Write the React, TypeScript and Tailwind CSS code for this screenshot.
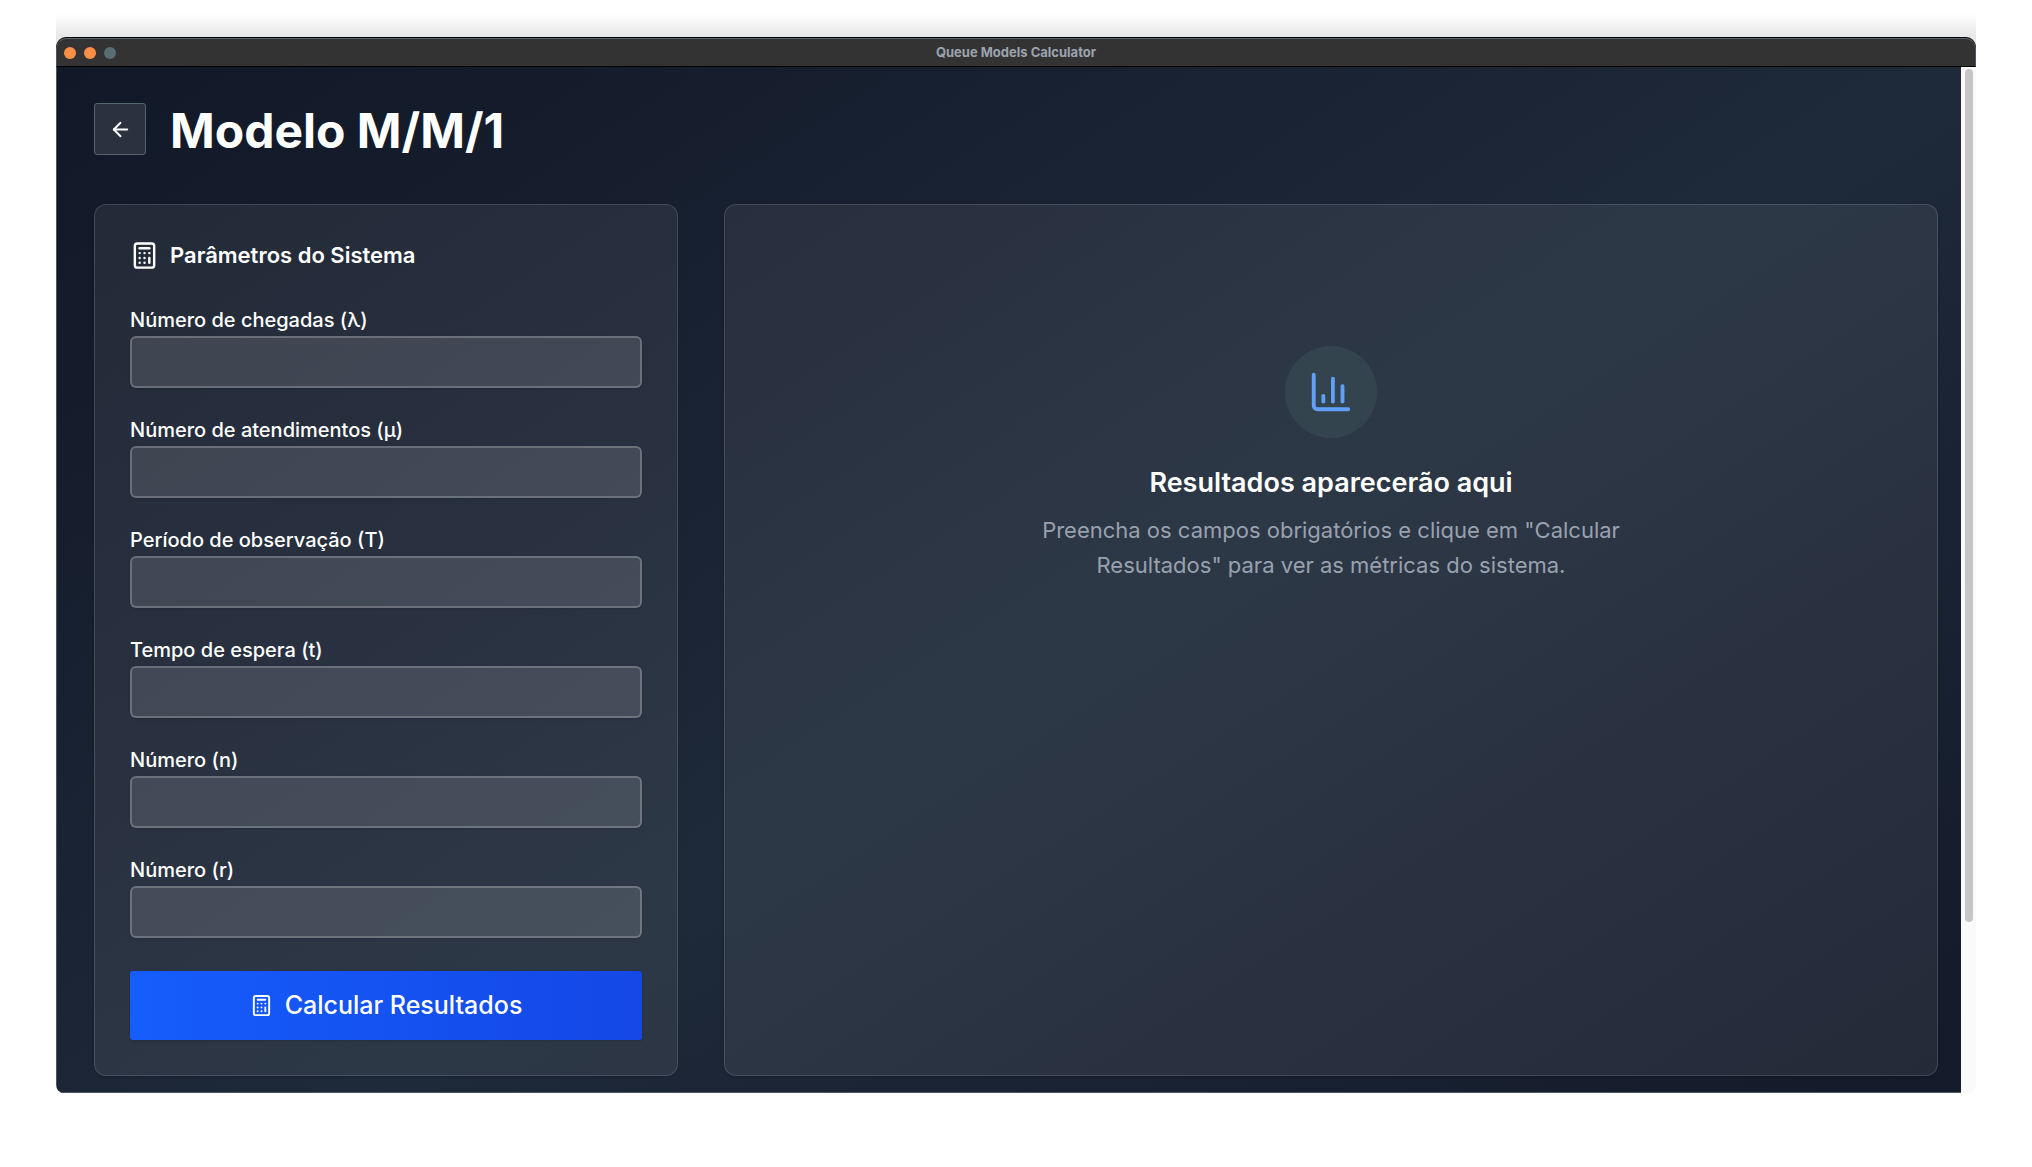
import { FormEvent } from "react";
import { ArrowLeft, Calculator, ChartColumn } from "lucide-react";

const fields = [
  { id: "lambda", label: "Número de chegadas (λ)" },
  { id: "mu", label: "Número de atendimentos (μ)" },
  { id: "periodo", label: "Período de observação (T)" },
  { id: "espera", label: "Tempo de espera (t)" },
  { id: "n", label: "Número (n)" },
  { id: "r", label: "Número (r)" },
];

function TitleBar() {
  return (
    <header className="relative flex h-[29px] items-center justify-center rounded-t-[10px] border border-b-black border-x-[#4b5563] border-t-[#5b636b] bg-[#333333] shadow-[0_-1px_0_#000]">
      <div className="absolute left-[7px] flex gap-2">
        <span className="size-3 rounded-full bg-[#fe8f47]" />
        <span className="size-3 rounded-full bg-[#fe8f47]" />
        <span className="size-3 rounded-full bg-[#586e73]" />
      </div>
      <p className="text-[13px] font-bold leading-none text-[#9ca3af]">
        Queue Models Calculator
      </p>
    </header>
  );
}

function ParametersCard() {
  const handleSubmit = (e: FormEvent) => e.preventDefault();

  return (
    <section className="rounded-xl border border-white/13 bg-white/7 px-[35px] py-[35px] shadow-sm">
      <h2 className="flex h-[30px] items-center gap-[11px] text-[22px] font-semibold">
        <Calculator size={29} />
        Parâmetros do Sistema
      </h2>

      <form onSubmit={handleSubmit} className="mt-9">
        <div className="flex flex-col gap-7">
          {fields.map((field) => (
            <div key={field.id} className="flex flex-col gap-[2px]">
              <label htmlFor={field.id} className="text-[20px] font-medium leading-7">
                {field.label}
              </label>
              <input
                id={field.id}
                type="text"
                className="h-[52px] w-full rounded-md border-2 border-white/22 bg-white/12 px-4 text-[20px] shadow-sm outline-none"
              />
            </div>
          ))}
        </div>

        <button
          type="submit"
          className="mt-[33px] flex h-[69px] w-full items-center justify-center gap-3 rounded-[3px] bg-linear-to-r from-[#155dfc] to-[#1447e6] text-[25px] font-medium shadow-sm"
        >
          <Calculator size={23} />
          Calcular Resultados
        </button>
      </form>
    </section>
  );
}

function ResultsCard() {
  return (
    <section className="col-span-2 flex flex-col items-center rounded-xl border border-white/13 bg-white/7 pt-[141px] text-center shadow-sm">
      <div className="flex size-[92px] items-center justify-center rounded-full bg-[#34444f]">
        <ChartColumn size={46} className="text-[#60a0fb]" />
      </div>
      <h3 className="mt-[25px] text-[27px] font-semibold leading-10">
        Resultados aparecerão aqui
      </h3>
      <p className="mt-[10px] max-w-[600px] text-[22px] leading-[35px] text-[#99a1af]">
        Preencha os campos obrigatórios e clique em "Calcular Resultados" para ver as métricas do
        sistema.
      </p>
    </section>
  );
}

export default function App() {
  return (
    <div className="bg-white px-14 pb-[74px] pt-[14px] font-[Inter,sans-serif] text-white">
      <div className="-mb-3 h-[36px] bg-linear-to-b from-white to-[#e8e8e8] to-60%" />

      <div className="relative">
        <TitleBar />

        <div className="flex overflow-hidden rounded-b-lg bg-[#fafafa]">
          <main className="min-w-0 flex-1 border-b border-l border-[#4b5563] bg-linear-to-br from-[#111827] via-[#1e2939] to-[#111827] bg-size-[100%_120%] bg-no-repeat pb-4 pl-[37px] pr-[23px] pt-9">
            <div className="flex items-center gap-6">
              <button
                type="button"
                aria-label="Voltar"
                className="flex size-[52px] items-center justify-center rounded-[3px] border border-[#52666c] bg-[#2b323f]"
              >
                <ArrowLeft size={23} />
              </button>
              <h1 className="pt-1 text-[48px] font-bold leading-[48px]">Modelo M/M/1</h1>
            </div>

            <div className="mt-[49px] grid grid-cols-3 gap-[46px]">
              <ParametersCard />
              <ResultsCard />
            </div>
          </main>

          {/* scrollbar */}
          <div className="w-[15px] shrink-0 px-1 pt-[2px]">
            <div className="h-5/6 w-2 rounded-full bg-[#c6c6c8]" />
          </div>
        </div>
      </div>
    </div>
  );
}
